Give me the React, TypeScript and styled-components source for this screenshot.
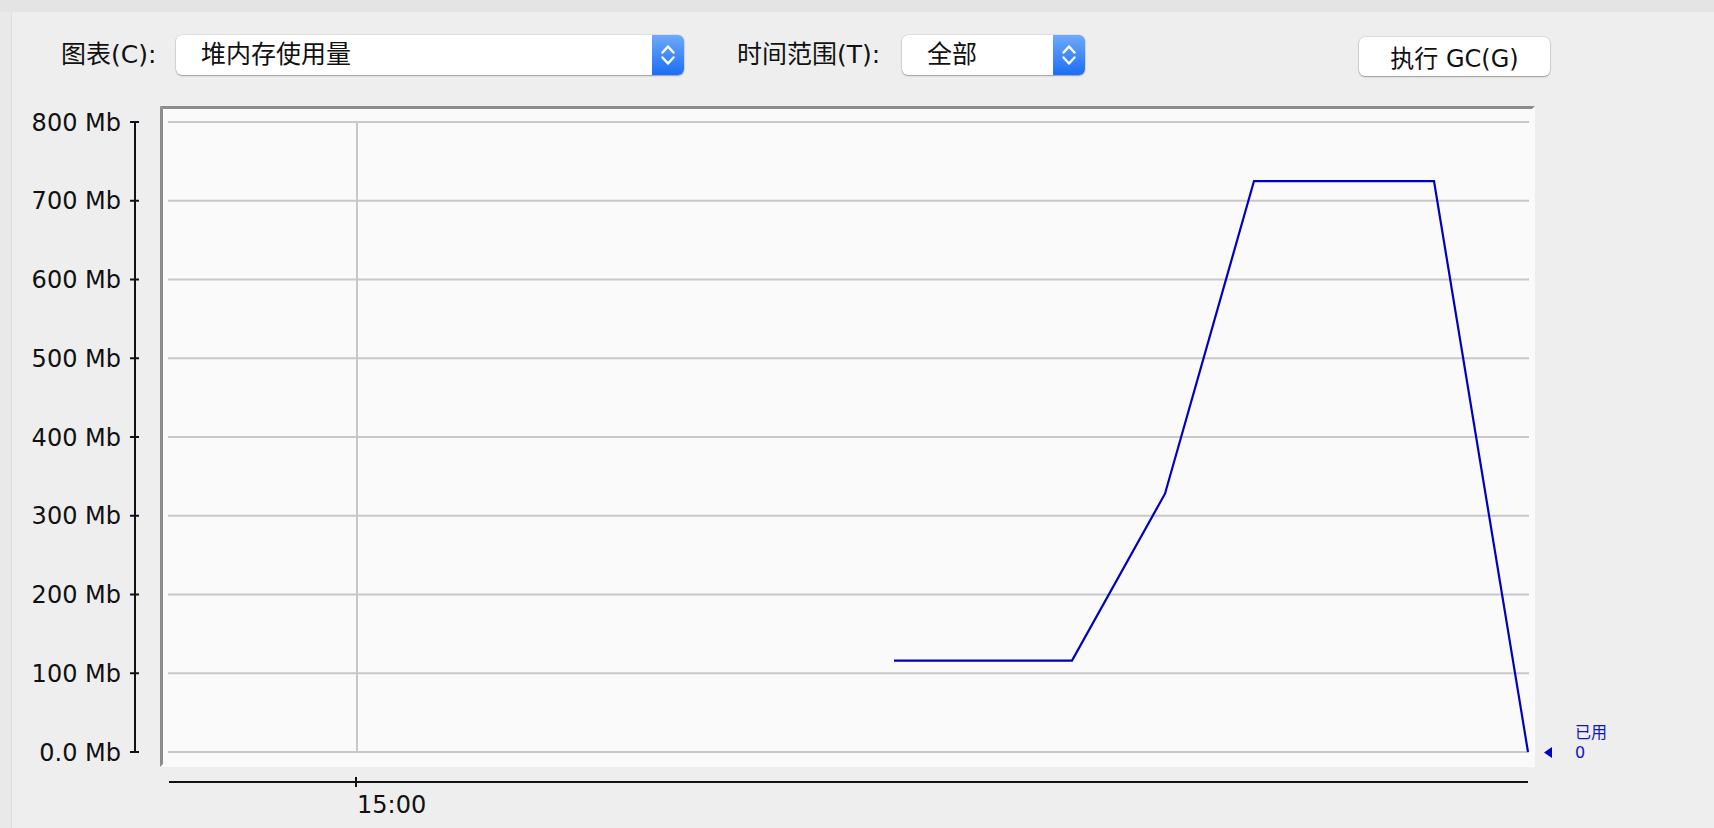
import styled, { createGlobalStyle } from "styled-components";

const GlobalStyle = createGlobalStyle`
  html, body {
    margin: 0;
    padding: 0;
    background: #eeeeee;
    overflow: hidden;
  }
  body {
    font-family: "DejaVu Sans", "Noto Sans CJK SC", sans-serif;
    color: #111;
  }
`;

const Window = styled.div`
  display: flex;
  flex-direction: column;
  width: 1714px;
  height: 828px;
`;

const TopBand = styled.div`
  height: 12px;
  background: #e4e4e4;
`;

const Body = styled.div`
  flex: 1;
  display: flex;
`;

const SideStrip = styled.div`
  width: 11px;
  background: #e9e9e9;
  border-right: 1px solid #dedede;
`;

const Panel = styled.div`
  flex: 1;
  display: flex;
  flex-direction: column;
  background: #eeeeee;
`;

const Toolbar = styled.div`
  display: flex;
  align-items: flex-start;
  padding: 23px 0 0 49px;
  height: 42px;
`;

const Label = styled.div<{ $width: number; $gap?: number }>`
  width: ${(p) => p.$width}px;
  margin-left: ${(p) => p.$gap ?? 0}px;
  height: 40px;
  line-height: 40px;
  font-size: 25px;
  white-space: nowrap;
`;

const Combo = styled.div<{ $width: number }>`
  display: flex;
  width: ${(p) => p.$width}px;
  height: 40px;
  background: #ffffff;
  border-radius: 6px;
  box-shadow: 0 1px 1.5px rgba(0, 0, 0, 0.3), 0 0 0 0.5px rgba(0, 0, 0, 0.12);
`;

const ComboText = styled.div`
  flex: 1;
  padding-left: 25px;
  line-height: 40px;
  font-size: 25px;
  white-space: nowrap;
`;

const ComboArrows = styled.div`
  width: 32px;
  display: flex;
  align-items: center;
  justify-content: center;
  border-radius: 0 6px 6px 0;
  background: linear-gradient(#6eaafb, #1b6ef6);
`;

const GcButton = styled.button`
  margin-left: 274px;
  margin-top: 2px;
  width: 191px;
  height: 39px;
  padding: 0;
  background: #ffffff;
  border: none;
  border-radius: 6px;
  box-shadow: 0 1px 1.5px rgba(0, 0, 0, 0.3), 0 0 0 0.5px rgba(0, 0, 0, 0.15);
  font-family: "DejaVu Sans", "Noto Sans CJK SC", sans-serif;
  font-size: 24px;
  color: #111;
`;

const ChartSvg = styled.svg`
  display: block;
  margin-top: 13px;
`;

const AxisLabel = styled.text`
  font-family: "DejaVu Sans", sans-serif;
  font-size: 24px;
  fill: #111;
`;

const LegendText = styled.text`
  font-family: "DejaVu Sans", "Noto Sans CJK SC", sans-serif;
  font-size: 16px;
  fill: #1414c4;
`;

const Arrows = () => (
  <svg width="16" height="24" viewBox="0 0 16 24">
    <polyline points="2.5,9.5 8,3.5 13.5,9.5" fill="none" stroke="#fff" strokeWidth="2.4" strokeLinecap="round" strokeLinejoin="round" />
    <polyline points="2.5,14.5 8,20.5 13.5,14.5" fill="none" stroke="#fff" strokeWidth="2.4" strokeLinecap="round" strokeLinejoin="round" />
  </svg>
);

const yOf = (mb: number) => 752 - mb * 0.7875;

const used: [number, number][] = [
  [894, 116],
  [1072, 116],
  [1165, 328],
  [1254, 725],
  [1434, 725],
  [1528, 0],
];

const ticks = [0, 100, 200, 300, 400, 500, 600, 700, 800];

const Chart = () => (
  <ChartSvg width="1702" height="738" viewBox="12 90 1702 738">
    <rect x="160" y="106" width="1375" height="661" fill="#fafafa" />
    <polygon points="160,106 1535,106 1532,109 163,109" fill="#8c8c8c" />
    <polygon points="160,106 163,109 163,764 160,767" fill="#8c8c8c" />

    {ticks.map((t) => (
      <line key={`g${t}`} x1="168" x2="1529" y1={yOf(t)} y2={yOf(t)} stroke="#c8c8c8" strokeWidth="2" />
    ))}
    <line x1="357" x2="357" y1="122" y2="752" stroke="#c8c8c8" strokeWidth="2" />

    <line x1="135" x2="135" y1="121" y2="753" stroke="#111" strokeWidth="2" />
    {ticks.map((t) => (
      <g key={`t${t}`}>
        <line x1="130" x2="139" y1={yOf(t)} y2={yOf(t)} stroke="#111" strokeWidth="2" />
        <AxisLabel x="121" y={yOf(t) + 8.5} textAnchor="end">
          {t === 0 ? "0.0 Mb" : `${t} Mb`}
        </AxisLabel>
      </g>
    ))}

    <line x1="169" x2="1528" y1="782" y2="782" stroke="#111" strokeWidth="2" />
    <line x1="356" x2="356" y1="777" y2="787" stroke="#111" strokeWidth="2" />
    <AxisLabel x="357" y="813">15:00</AxisLabel>

    <polyline
      points={used.map(([x, v]) => `${x},${yOf(v)}`).join(" ")}
      fill="none"
      stroke="#0000c0"
      strokeWidth="2.2"
      strokeLinejoin="miter"
    />

    <polygon points="1544,752.5 1552,747 1552,758" fill="#0000c0" />
    <LegendText x="1575" y="738">已用</LegendText>
    <LegendText x="1575" y="758">0</LegendText>
  </ChartSvg>
);

export default function App() {
  return (
    <>
      <GlobalStyle />
      <Window>
        <TopBand />
        <Body>
          <SideStrip />
          <Panel>
            <Toolbar>
              <Label $width={115}>图表(C):</Label>
              <Combo $width={508}>
                <ComboText>堆内存使用量</ComboText>
                <ComboArrows>
                  <Arrows />
                </ComboArrows>
              </Combo>
              <Label $width={165} $gap={53}>时间范围(T):</Label>
              <Combo $width={183}>
                <ComboText>全部</ComboText>
                <ComboArrows>
                  <Arrows />
                </ComboArrows>
              </Combo>
              <GcButton>执行 GC(G)</GcButton>
            </Toolbar>
            <Chart />
          </Panel>
        </Body>
      </Window>
    </>
  );
}
